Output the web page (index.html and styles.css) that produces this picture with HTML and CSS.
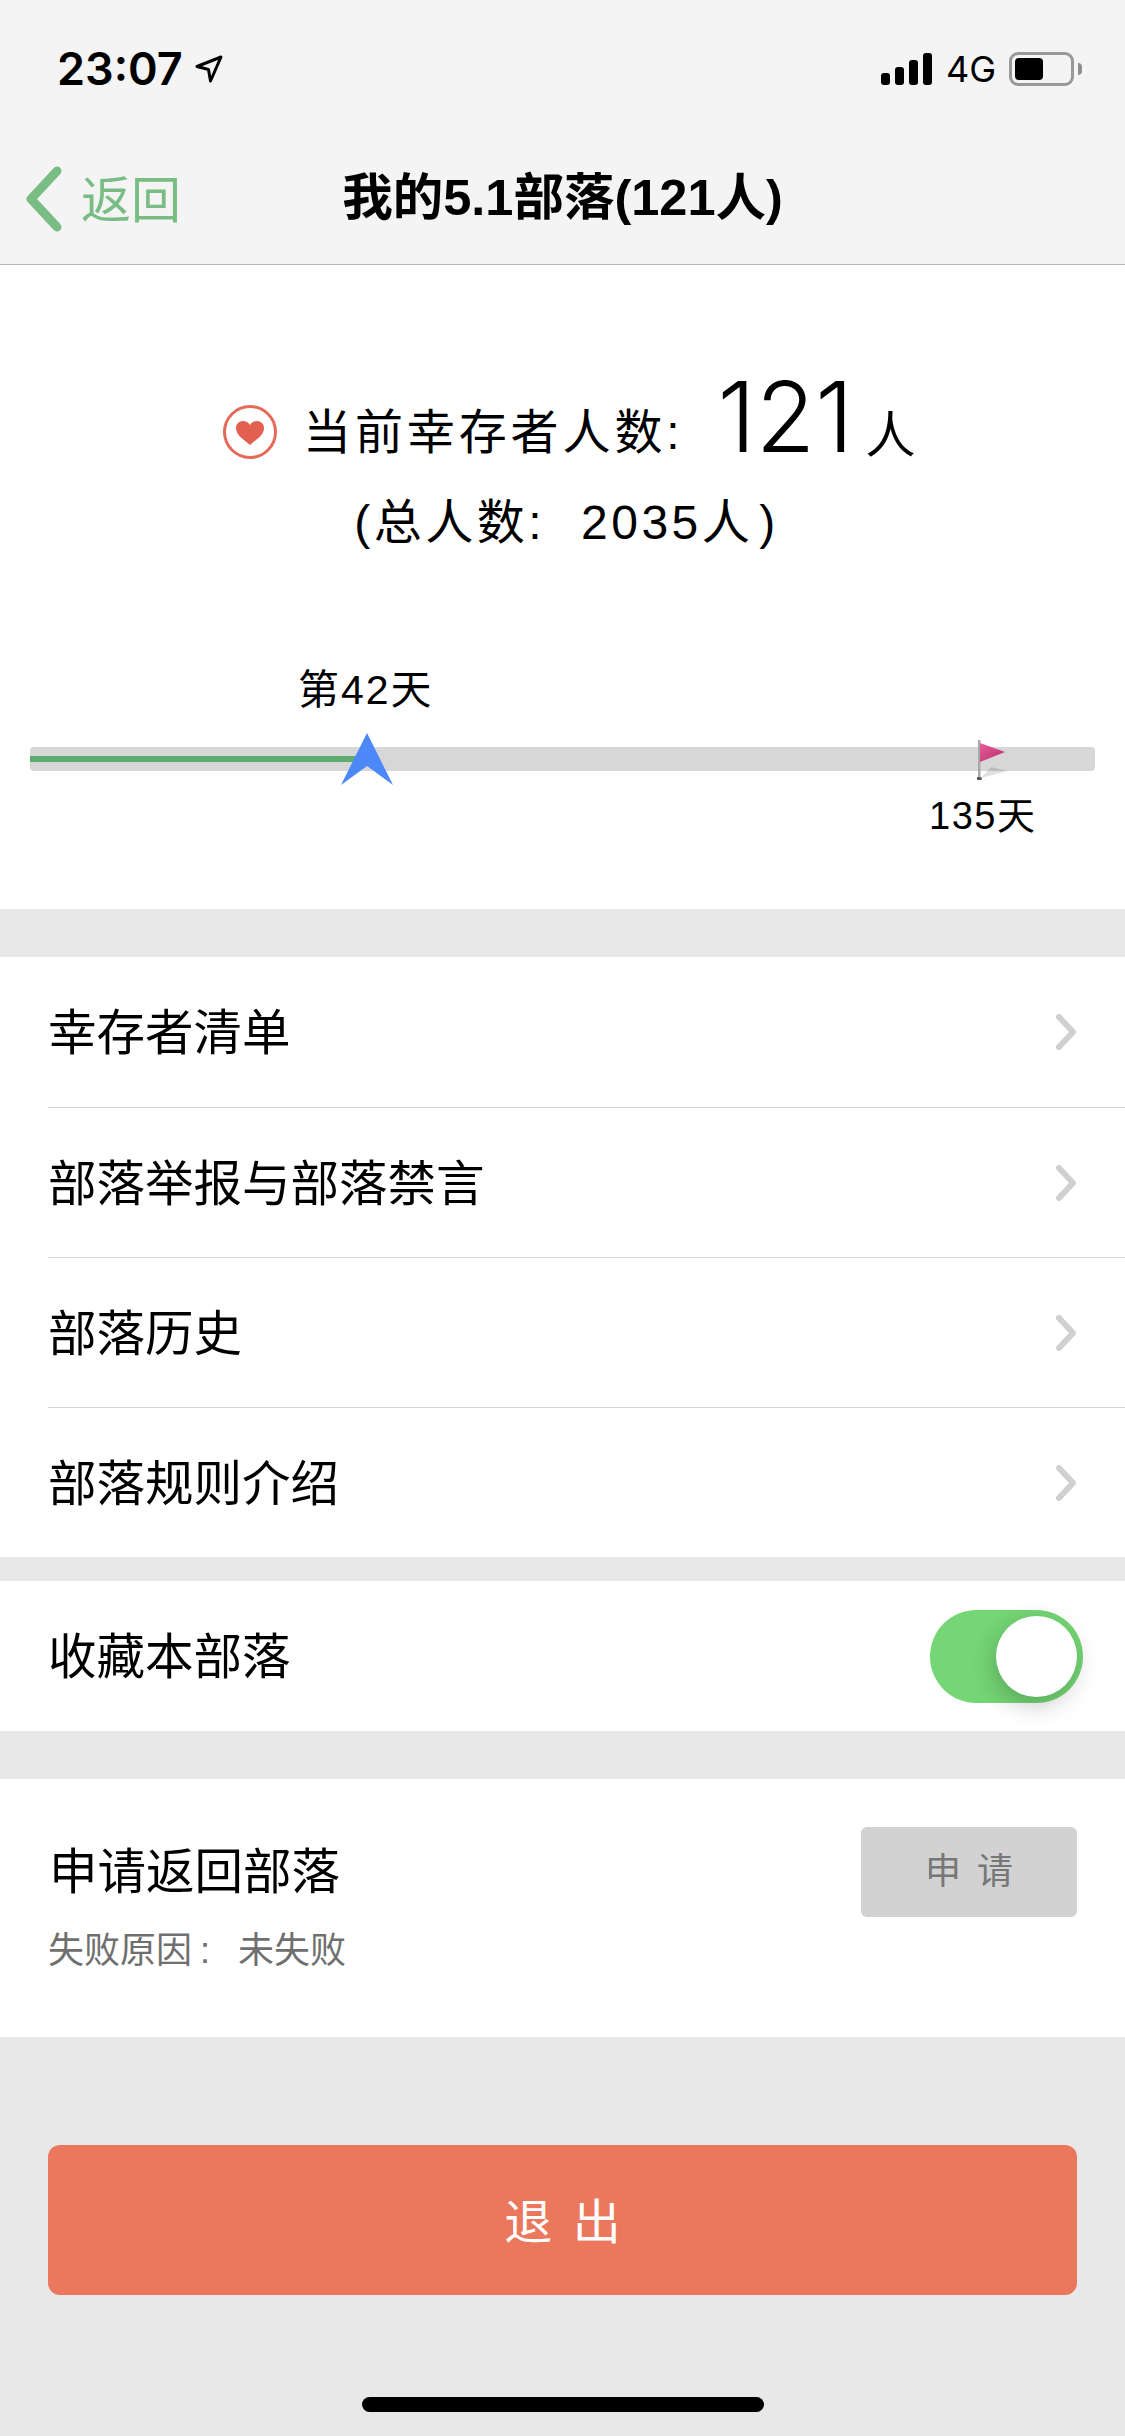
FILE: index.html
```html
<!DOCTYPE html>
<html lang="zh-CN">
<head>
    <meta charset="UTF-8">
    <meta name="viewport" content="width=device-width, initial-scale=1.0">
    <title>我的5.1部落</title>
    <link rel="stylesheet" href="styles.css">
</head>
<body>
    <div class="phone">
        <div class="top-bar">
            <div class="status-bar">
                <div class="status-left">
                    <span class="time">23:07</span>
                    <svg class="loc-icon" width="30" height="30" viewBox="0 0 30 30">
                        <path d="M27 3 L3 12.500 L14.500 15.500 L16.500 27 Z" fill="none" stroke="#000" stroke-width="3" stroke-linejoin="round"/>
                    </svg>
                </div>
                <div class="status-right">
                    <div class="signal">
                        <i class="s1"></i><i class="s2"></i><i class="s3"></i><i class="s4"></i>
                    </div>
                    <span class="net">4G</span>
                    <div class="battery"><div class="battery-fill"></div></div>
                    <div class="battery-nub"></div>
                </div>
            </div>
            <div class="nav-bar">
                <div class="back">
                    <svg width="38" height="66" viewBox="0 0 38 66">
                        <path d="M32 5 L6 33 L32 61" fill="none" stroke="#79bd85" stroke-width="9" stroke-linecap="round" stroke-linejoin="round"/>
                    </svg>
                    <span>返回</span>
                </div>
                <div class="nav-title">我的5.1部落(121人)</div>
            </div>
        </div>

        <section class="summary">
            <div class="count-line">
                <svg class="heart" width="56" height="56" viewBox="0 0 56 56">
                    <circle cx="28" cy="28" r="25.500" fill="none" stroke="#e46a5a" stroke-width="3"/>
                    <path d="M28 41 C21 35 14 31 14 24 C14 20 17 17 21 17 C24 17 26.500 18.500 28 21 C29.500 18.500 32 17 35 17 C39 17 42 20 42 24 C42 31 35 35 28 41 Z" fill="#e2604f"/>
                </svg>
                <span class="count-label">当前幸存者人数:</span>
                <span class="count-num">121</span>
                <span class="count-unit">人</span>
            </div>
            <div class="total-line">(总人数:<span class="total-num">2035</span>人<span class="total-close">)</span></div>
            <div class="progress">
                <div class="day-now">第42天</div>
                <div class="track"><div class="track-fill"></div></div>
                <svg class="arrow" width="52" height="52" viewBox="0 0 52 52">
                    <path d="M26 0 L52 52 L26 33 L0 52 Z" fill="#4d88f8"/>
                </svg>
                <svg class="flag" width="40" height="42" viewBox="0 0 40 42">
                    <defs>
                        <linearGradient id="flagfill" x1="0" y1="0" x2="1" y2="1">
                            <stop offset="0" stop-color="#e8609a"/>
                            <stop offset="1" stop-color="#b82a6a"/>
                        </linearGradient>
                    </defs>
                    <path d="M4 39 L14 28 L30 32 Z" fill="#000" opacity="0.12"/>
                    <rect x="1" y="1" width="2.500" height="38" fill="#a9a9a9"/>
                    <ellipse cx="2" cy="39.500" rx="3" ry="1.500" fill="#555"/>
                    <path d="M3 4 L28 13 L3 23 Z" fill="url(#flagfill)"/>
                </svg>
                <div class="day-end">135天</div>
            </div>
        </section>

        <section class="menu">
            <div class="menu-row">
                <span class="row-label">幸存者清单</span>
                <svg class="chev" width="24" height="38" viewBox="0 0 24 38"><path d="M5 4 L19 19 L5 34" fill="none" stroke="#d0d0d0" stroke-width="6" stroke-linecap="round" stroke-linejoin="round"/></svg>
            </div>
            <div class="menu-row">
                <span class="row-label">部落举报与部落禁言</span>
                <svg class="chev" width="24" height="38" viewBox="0 0 24 38"><path d="M5 4 L19 19 L5 34" fill="none" stroke="#d0d0d0" stroke-width="6" stroke-linecap="round" stroke-linejoin="round"/></svg>
            </div>
            <div class="menu-row">
                <span class="row-label">部落历史</span>
                <svg class="chev" width="24" height="38" viewBox="0 0 24 38"><path d="M5 4 L19 19 L5 34" fill="none" stroke="#d0d0d0" stroke-width="6" stroke-linecap="round" stroke-linejoin="round"/></svg>
            </div>
            <div class="menu-row">
                <span class="row-label">部落规则介绍</span>
                <svg class="chev" width="24" height="38" viewBox="0 0 24 38"><path d="M5 4 L19 19 L5 34" fill="none" stroke="#d0d0d0" stroke-width="6" stroke-linecap="round" stroke-linejoin="round"/></svg>
            </div>
        </section>

        <section class="fav-row">
            <span class="row-label">收藏本部落</span>
            <div class="toggle"><div class="knob"></div></div>
        </section>

        <section class="apply">
            <div class="apply-text">
                <div class="apply-title">申请返回部落</div>
                <div class="apply-sub">失败原因<span class="apply-colon">:</span><span class="apply-value">未失败</span></div>
            </div>
            <div class="apply-btn">申 请</div>
        </section>

        <div class="exit-wrap">
            <div class="exit-btn">退 出</div>
        </div>
        <div class="home-bar"></div>
    </div>
</body>
</html>
```

FILE: styles.css
```css
* {
    box-sizing: border-box;
}
body {
    margin: 0;
    font-family: "Liberation Sans", "Noto Sans CJK SC", sans-serif;
    color: #000;
    background-color: #e8e8e8;
}
.phone {
    width: 1125px;
    height: 2436px;
    position: relative;
    overflow: hidden;
    background-color: #e8e8e8;
}
.top-bar {
    height: 265px;
    background-color: #f4f4f4;
    border-bottom: 1px solid #b4b4b4;
}
.status-bar {
    height: 132px;
    padding: 46px 43px 0 57px;
    display: flex;
    justify-content: space-between;
    align-items: flex-start;
}
.status-left {
    display: flex;
    align-items: center;
    height: 46px;
}
.time {
    font-family: Inter, sans-serif;
    font-size: 45px;
    font-weight: 600;
    line-height: 46px;
}
.loc-icon {
    margin-left: 11px;
}
.status-right {
    display: flex;
    align-items: center;
    height: 46px;
}
.signal {
    display: flex;
    align-items: flex-end;
    gap: 5px;
    height: 32px;
}
.signal i {
    display: block;
    width: 9px;
    background-color: #000;
    border-radius: 3px;
}
.s1 { height: 12px; }
.s2 { height: 18px; }
.s3 { height: 25px; }
.s4 { height: 32px; }
.net {
    margin-left: 14px;
    font-family: Inter, sans-serif;
    font-size: 36px;
    font-weight: 400;
}
.battery {
    margin-left: 13px;
    width: 65px;
    height: 34px;
    border: 3px solid #999;
    border-radius: 9px;
    padding: 3px;
}
.battery-fill {
    width: 28px;
    height: 22px;
    background-color: #000;
    border-radius: 4px;
}
.battery-nub {
    width: 4px;
    height: 12px;
    margin-left: 4px;
    background-color: #8e8e8e;
    border-radius: 0 4px 4px 0;
}
.nav-bar {
    height: 132px;
    position: relative;
    display: flex;
    align-items: flex-start;
    padding: 28px 0 0 25px;
}
.back {
    display: flex;
    align-items: center;
    gap: 18px;
    color: #79bd85;
    font-size: 50px;
    font-weight: 400;
}
.back span {
    padding-bottom: 6px;
}
.nav-title {
    position: absolute;
    left: 0;
    right: 0;
    top: 24px;
    text-align: center;
    font-size: 50.500px;
    font-weight: 700;
}
.summary {
    height: 644px;
    background-color: #fff;
    padding-top: 94px;
}
.count-line {
    display: flex;
    align-items: center;
    height: 110px;
    padding-left: 222px;
}
.heart {
    margin-top: 36px;
    flex: none;
}
.count-label {
    margin-left: 25px;
    margin-top: 28px;
    font-size: 48px;
    font-weight: 400;
    letter-spacing: 3.900px;
}
.count-num {
    margin-left: 34px;
    margin-top: 6px;
    font-family: Inter, sans-serif;
    font-size: 97px;
    font-weight: 300;
    line-height: 110px;
}
.count-unit {
    margin-left: 12px;
    margin-top: 33px;
    font-size: 50px;
    font-weight: 400;
}
.total-line {
    margin-top: 19px;
    padding-left: 8px;
    text-align: center;
    font-size: 48px;
    font-weight: 400;
    letter-spacing: 3.500px;
    height: 70px;
    line-height: 70px;
}
.total-num {
    margin-left: 36px;
}
.total-close {
    margin-left: 6px;
}
.progress {
    position: relative;
    margin-top: 79px;
    height: 272px;
}
.day-now {
    position: absolute;
    left: 298px;
    top: 19px;
    font-size: 41px;
    font-weight: 400;
    letter-spacing: 2px;
}
.track {
    position: absolute;
    left: 30px;
    top: 110px;
    width: 1065px;
    height: 24px;
    background-color: #d7d7d7;
    border-radius: 4px;
    overflow: hidden;
}
.track-fill {
    width: 330px;
    height: 6px;
    margin-top: 9px;
    background-color: #5aad6e;
}
.arrow {
    position: absolute;
    left: 341px;
    top: 96px;
}
.flag {
    position: absolute;
    left: 977px;
    top: 102px;
}
.day-end {
    position: absolute;
    left: 929px;
    top: 148px;
    font-size: 38px;
    font-weight: 400;
    letter-spacing: 1.500px;
}
.menu {
    margin-top: 48px;
    height: 600px;
    background-color: #fff;
    padding-left: 48px;
}
.menu-row {
    height: 150px;
    display: flex;
    align-items: center;
    justify-content: space-between;
    padding-right: 47px;
    font-size: 48.500px;
    font-weight: 400;
    border-top: 1px solid #d6d6d6;
}
.menu-row:first-child {
    border-top: 0;
}
.row-label {
    padding-bottom: 6px;
}
.fav-row {
    margin-top: 24px;
    height: 150px;
    background-color: #fff;
    display: flex;
    align-items: center;
    justify-content: space-between;
    padding: 0 42px 0 48px;
    font-size: 48.500px;
    font-weight: 400;
}
.toggle {
    width: 153px;
    height: 93px;
    border-radius: 47px;
    background-color: #74d674;
    padding: 6px;
    display: flex;
    justify-content: flex-end;
}
.knob {
    width: 81px;
    height: 81px;
    border-radius: 50%;
    background-color: #fff;
    box-shadow: -2px 8px 24px rgba(0, 0, 0, 0.22);
}
.apply {
    margin-top: 48px;
    height: 258px;
    background-color: #fff;
    display: flex;
    justify-content: space-between;
    padding: 48px 48px 0 48px;
}
.apply-title {
    margin-top: 15px;
    font-size: 48.500px;
    font-weight: 400;
    line-height: 60px;
    padding-left: 1px;
}
.apply-sub {
    margin-top: 19px;
    font-size: 36px;
    font-weight: 400;
    color: #6f6f6f;
}
.apply-colon {
    margin-left: 8px;
}
.apply-value {
    margin-left: 28px;
}
.apply-btn {
    width: 216px;
    height: 90px;
    line-height: 90px;
    text-align: center;
    background-color: #d2d2d2;
    border-radius: 6px;
    color: #777;
    font-size: 36px;
    font-weight: 400;
    word-spacing: 6px;
}
.exit-wrap {
    padding: 108px 48px 0;
}
.exit-btn {
    height: 150px;
    line-height: 156px;
    text-align: center;
    background-color: #eb775c;
    border-radius: 12px;
    color: #fff;
    font-size: 48px;
    font-weight: 400;
    word-spacing: 7px;
}
.home-bar {
    position: absolute;
    left: 362px;
    top: 2397px;
    width: 402px;
    height: 15px;
    border-radius: 8px;
    background-color: #000;
}
```
